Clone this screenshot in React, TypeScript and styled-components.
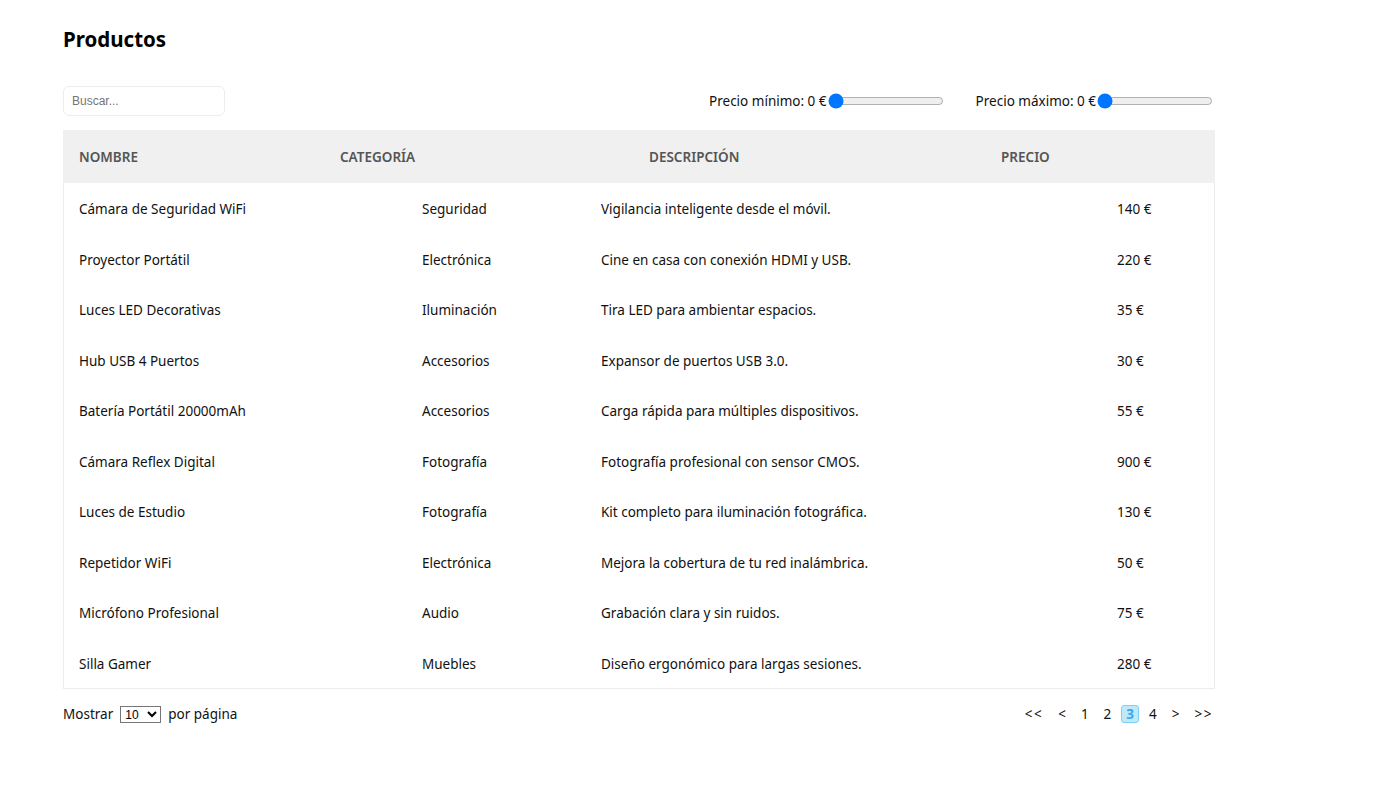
import React from "react";
import styled, { createGlobalStyle } from "styled-components";

const GlobalStyle = createGlobalStyle`
  html, body { margin: 0; padding: 0; background: #fff; }
  body { font-family: "Noto Sans", "Open Sans", sans-serif; color: #111; }
`;

const Page = styled.div`
  padding: 24px 0 0 63px;
  width: 1152px;
`;

const Title = styled.h1`
  margin: 0;
  font-size: 20.5px;
  font-weight: 700;
  line-height: 30px;
  color: #000;
`;

const Toolbar = styled.div`
  display: flex;
  align-items: center;
  justify-content: space-between;
  margin-top: 32px;
  height: 30px;
`;

const Search = styled.input`
  box-sizing: border-box;
  width: 162px;
  height: 30px;
  border: 1px solid #ececec;
  border-radius: 6px;
  padding: 0 8px;
  font-family: "Liberation Sans", Arial, sans-serif;
  font-size: 12px;
  outline: none;
  &::placeholder { color: #757575; }
`;

const Filters = styled.div`
  display: flex;
  align-items: center;
  gap: 31px;
  margin-right: 1px;
`;

const Filter = styled.label`
  display: flex;
  align-items: center;
  font-size: 13.5px;
  color: #111;
`;

const Range = styled.input`
  width: 116px;
  margin: 0 1px 0 1px;
  accent-color: #0075ff;
`;

const Table = styled.div`
  margin-top: 14px;
  border: 1px solid #ececec;
  border-top: none;
`;

const HeadRow = styled.div`
  display: grid;
  grid-template-columns: 261px 309px 352px 1fr;
  background: #f0f0f0;
  height: 53px;
  align-items: center;
  margin: 0 -1px;
`;

const HeadCell = styled.div`
  padding-left: 16px;
  font-size: 13.5px;
  font-weight: 600;
  color: #555;
  text-transform: uppercase;
`;

const Row = styled.div`
  box-sizing: border-box;
  display: grid;
  grid-template-columns: 343px 179px 516px 1fr;
  height: 50.5px;
  padding-top: 1.5px;
  align-items: center;
`;

const Cell = styled.div`
  padding-left: 15px;
  font-size: 13.5px;
  color: #111;
  white-space: nowrap;
`;

const Footer = styled.div`
  display: flex;
  align-items: center;
  justify-content: space-between;
  margin-top: 16px;
  font-size: 13.5px;
`;

const PerPage = styled.div`
  display: flex;
  align-items: center;
  gap: 7px;
`;

const Select = styled.select`
  font-family: "Liberation Sans", Arial, sans-serif;
  font-size: 12px;
  height: 17px;
  width: 41px;
  padding: 0;
  border: 1px solid #767676;
  border-radius: 0;
  background: #fff;
  color: #000;
`;

const Pager = styled.div`
  display: flex;
  align-items: center;
  gap: 5px;
  margin-right: -3px;
`;

const PageBtn = styled.button<{ $active?: boolean; $wide?: boolean }>`
  font-family: "Noto Sans", sans-serif;
  font-size: 13.5px;
  line-height: 16px;
  height: 18px;
  padding: 0 4px;
  margin: 0;
  border: 1px solid ${(p) => (p.$active ? "#7fd0f7" : "transparent")};
  border-radius: 3px;
  background: ${(p) => (p.$active ? "#bfe8fb" : "transparent")};
  color: ${(p) => (p.$active ? "#3aa9ea" : "#111")};
  font-weight: ${(p) => (p.$active ? 700 : 400)};
  letter-spacing: ${(p) => (p.$wide ? "1.5px" : "0")};
  cursor: pointer;
`;

const products = [
  ["Cámara de Seguridad WiFi", "Seguridad", "Vigilancia inteligente desde el móvil.", "140 €"],
  ["Proyector Portátil", "Electrónica", "Cine en casa con conexión HDMI y USB.", "220 €"],
  ["Luces LED Decorativas", "Iluminación", "Tira LED para ambientar espacios.", "35 €"],
  ["Hub USB 4 Puertos", "Accesorios", "Expansor de puertos USB 3.0.", "30 €"],
  ["Batería Portátil 20000mAh", "Accesorios", "Carga rápida para múltiples dispositivos.", "55 €"],
  ["Cámara Reflex Digital", "Fotografía", "Fotografía profesional con sensor CMOS.", "900 €"],
  ["Luces de Estudio", "Fotografía", "Kit completo para iluminación fotográfica.", "130 €"],
  ["Repetidor WiFi", "Electrónica", "Mejora la cobertura de tu red inalámbrica.", "50 €"],
  ["Micrófono Profesional", "Audio", "Grabación clara y sin ruidos.", "75 €"],
  ["Silla Gamer", "Muebles", "Diseño ergonómico para largas sesiones.", "280 €"],
];

export default function App() {
  return (
    <>
      <GlobalStyle />
      <Page>
        <Title>Productos</Title>
        <Toolbar>
          <Search placeholder="Buscar..." />
          <Filters>
            <Filter>
              Precio mínimo: 0 €
              <Range type="range" min={0} max={1000} defaultValue={0} />
            </Filter>
            <Filter>
              Precio máximo: 0 €
              <Range type="range" min={0} max={1000} defaultValue={0} />
            </Filter>
          </Filters>
        </Toolbar>
        <Table>
          <HeadRow>
            <HeadCell>Nombre</HeadCell>
            <HeadCell>Categoría</HeadCell>
            <HeadCell>Descripción</HeadCell>
            <HeadCell>Precio</HeadCell>
          </HeadRow>
          {products.map((p) => (
            <Row key={p[0]}>
              {p.map((c, i) => (
                <Cell key={i}>{c}</Cell>
              ))}
            </Row>
          ))}
        </Table>
        <Footer>
          <PerPage>
            Mostrar
            <Select defaultValue="10">
              <option value="5">5</option>
              <option value="10">10</option>
              <option value="20">20</option>
            </Select>
            por página
          </PerPage>
          <Pager>
            <PageBtn $wide>&lt;&lt;</PageBtn>
            <PageBtn>&lt;</PageBtn>
            <PageBtn>1</PageBtn>
            <PageBtn>2</PageBtn>
            <PageBtn $active>3</PageBtn>
            <PageBtn>4</PageBtn>
            <PageBtn>&gt;</PageBtn>
            <PageBtn $wide>&gt;&gt;</PageBtn>
          </Pager>
        </Footer>
      </Page>
    </>
  );
}
